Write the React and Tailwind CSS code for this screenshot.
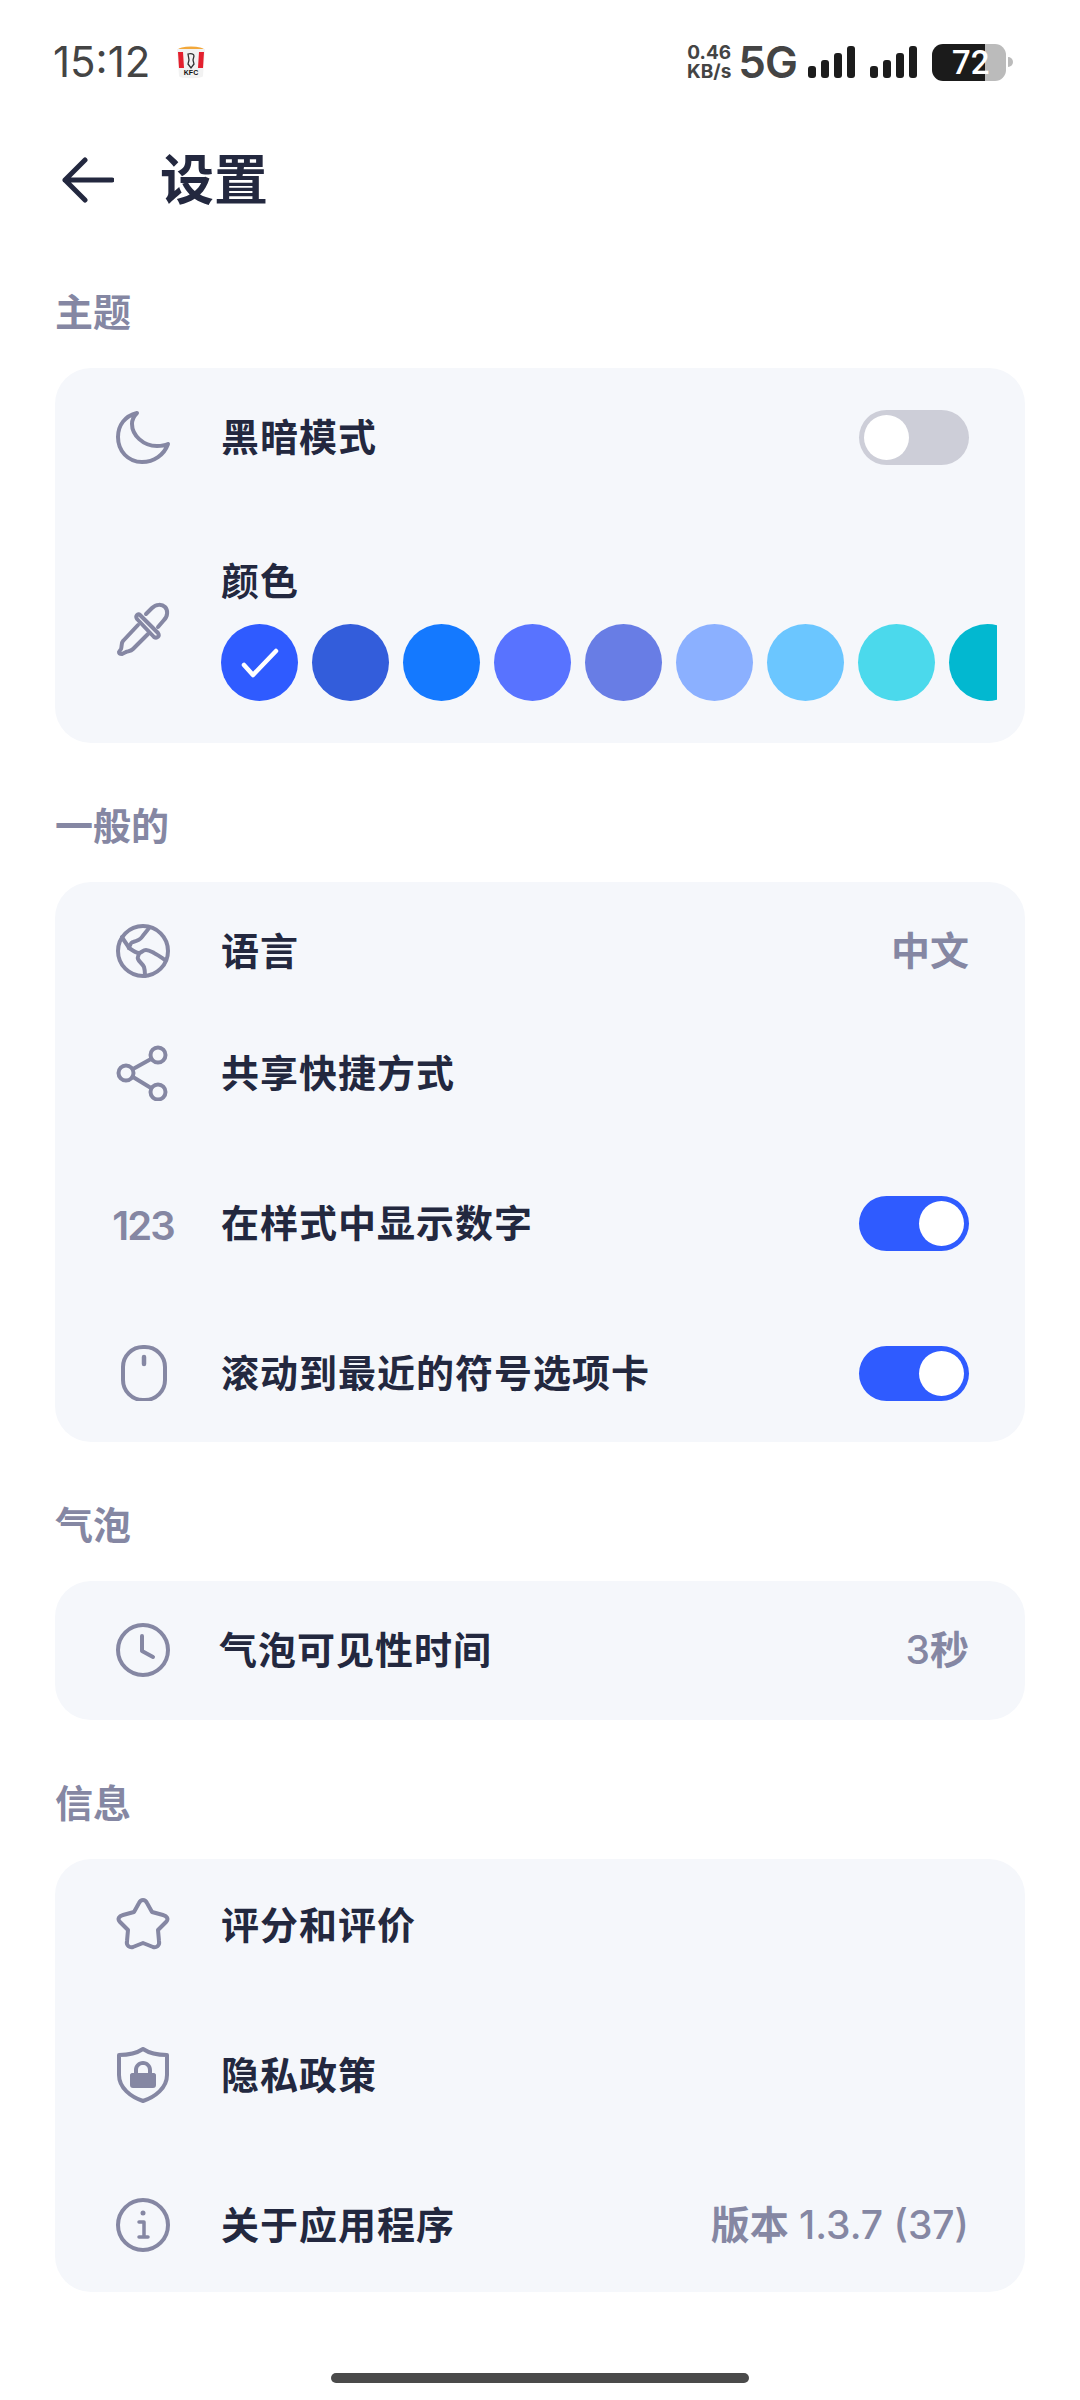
import React from 'react';

const GRAY = '#8587a3';

// Outline icons, all on a 56 unit box
const Icon = ({ children, fill = 'none' }) => (
  <svg width="56" height="56" viewBox="0 0 56 56" fill={fill} stroke={GRAY} strokeWidth="4" strokeLinecap="round" strokeLinejoin="round">
    {children}
  </svg>
);

const MoonIcon = () => (
  <Icon>
    <path d="M22 4C10 7 3 16 3 28c0 14 10 25 24 25 12 0 22-7 26-18-4 2-8 2-11 2-14 0-25-11-25-22 0-4 2-8 5-11Z" />
  </Icon>
);

const DropperIcon = () => (
  <Icon>
    <path d="M25 15c-2-2-5 1-3 4l17 18c3 2 6-1 4-4Z" />
    <path d="m31 14 6-6c4-4 10-4 13-1s3 9-1 13l-6 7" />
    <path d="M23 25 8 41c-2 2-1 6-2 8l-2 3c0 2 1 2 3 2l4-2c3-1 5-1 7-3l15-15" />
  </Icon>
);

const GlobeIcon = () => (
  <Icon>
    <circle cx="28" cy="28" r="25" />
    <path d="M7 14c2 4 5 7 7 11 1-3 2-6 4-6 4-1 7-2 9-5 2-3 5-6 7-9" />
    <path d="M14 25c3 2 7 5 10 5 2 0 4-3 7-3 3 0 6 2 8 3 4 2 8 5 11 7" />
    <path d="M24 30c0 2-2 4-1 6 1 3 5 5 6 8 1 3 1 6 1 9" />
  </Icon>
);

const ShareIcon = () => (
  <Icon>
    <circle cx="11" cy="28" r="7.5" />
    <circle cx="43" cy="10" r="7.5" />
    <circle cx="43" cy="47" r="7.5" />
    <path d="m18 24 18-10M18 32l18 11" />
  </Icon>
);

const MouseIcon = () => (
  <Icon>
    <rect x="8" y="2" width="42" height="53" rx="20" />
    <path d="M29 12v7" strokeWidth="4.5" />
  </Icon>
);

const ClockIcon = () => (
  <Icon>
    <circle cx="28" cy="28" r="25" />
    <path d="M27 14v15l11 6" />
  </Icon>
);

const StarIcon = () => (
  <Icon>
    <path d="M24 6c2-4 6-4 8 0l5 9 11 3c4 1 6 4 3 7l-8 8 1 11c1 5-3 7-6 6l-10-4-10 4c-3 1-7-1-6-6l1-11-8-8c-3-3-1-6 3-7l11-3Z" />
  </Icon>
);

const ShieldIcon = () => (
  <Icon>
    <path d="M28 2c-6 4-14 6-24 6v20c0 13 12 22 24 26 12-4 24-13 24-26V8C42 8 34 6 28 2Z" />
    <path fill={GRAY} stroke="none" d="M17 26h2v-3c0-5 4-9 9-9s9 4 9 9v3h2c1 0 2 1 2 2v10c0 2-1 3-3 3H18c-2 0-3-1-3-3V28c0-1 1-2 2-2Zm6 0h10v-3c0-3-2-5-5-5s-5 2-5 5Z" />
  </Icon>
);

const InfoIcon = () => (
  <Icon>
    <circle cx="28" cy="28" r="25" />
    <path d="M24 25h5v15M24 40h9" strokeWidth="3.5" />
    <circle cx="28" cy="16" r="2.5" fill={GRAY} stroke="none" />
  </Icon>
);

const NumbersIcon = () => (
  <span className="mt-[5px] text-[40px] leading-[56px] font-semibold tracking-[-2px] text-[#8587a3] whitespace-nowrap">123</span>
);

const Toggle = ({ on }) => (
  <div className={`w-[110px] h-[55px] rounded-full flex items-center px-[5px] ${on ? 'bg-[#2f5bff] justify-end' : 'bg-[#cdced8] justify-start'}`}>
    <div className="w-[45px] h-[45px] rounded-full bg-white" />
  </div>
);

const Row = ({ icon, label, right, className = '', labelClass = 'ml-[50px]' }) => (
  <div className={`h-[100px] flex items-center pl-[60px] pr-[56px] ${className}`}>
    <div className="w-[56px] h-[56px] flex items-center justify-center shrink-0">{icon}</div>
    <div className={`flex-1 text-[38px] font-bold tracking-[1px] text-[#23283f] whitespace-nowrap ${labelClass}`}>{label}</div>
    {right}
  </div>
);

const Value = ({ children }) => (
  <span className="text-[39px] font-medium text-[#8587a3] whitespace-nowrap">{children}</span>
);

const Section = ({ title, children, className = '' }) => (
  <section className="mb-[55px]">
    <h2 className="h-[57px] leading-[57px] text-[38px] font-bold text-[#8587a3]">{title}</h2>
    <div className={`mt-[27px] rounded-[36px] bg-[#f5f7fb] ${className}`}>{children}</div>
  </section>
);

const swatches = ['#2f5bff', '#335ddb', '#1479ff', '#5873ff', '#687de5', '#8bb0ff', '#6bc6ff', '#4bd9ec', '#02b8d0'];

const SignalBars = () => (
  <div className="flex items-end gap-[5px] h-[32px]">
    <div className="w-[8px] h-[12px] rounded-[3px] bg-[#1c1c1c]" />
    <div className="w-[8px] h-[18px] rounded-[3px] bg-[#1c1c1c]" />
    <div className="w-[8px] h-[25px] rounded-[3px] bg-[#1c1c1c]" />
    <div className="w-[8px] h-[32px] rounded-[3px] bg-[#1c1c1c]" />
  </div>
);

const KfcBucket = () => (
  <svg width="28" height="33" viewBox="0 0 28 33">
    <ellipse cx="14" cy="3.5" rx="13" ry="3" fill="#f2a83b" />
    <path d="M0 3h28l-2 27c0 3-24 3-24 0Z" fill="#f2f2f2" />
    <path d="M1 6h5l1 16H2ZM27 6h-5l-1 16h5Z" fill="#e3202e" />
    <path d="M11 8c3-1 6 0 6 2l-1 4 1 4-3 4-3-4 1-4Z" fill="none" stroke="#333" strokeWidth="1.3" />
    <text x="14" y="29" textAnchor="middle" fontSize="7" fontWeight="700" fontFamily="Liberation Sans, sans-serif" fill="#111">KFC</text>
  </svg>
);

const StatusBar = () => (
  <div className="h-[124px] flex items-center justify-between pl-[53px] pr-[67px] text-[#444]">
    <div className="flex items-center gap-[27px]">
      <span className="text-[42px] leading-none font-normal">15:12</span>
      <KfcBucket />
    </div>
    <div className="flex items-center">
      <div className="flex flex-col items-center text-[19px] leading-[19px] font-bold">
        <span>0.46</span>
        <span>KB/s</span>
      </div>
      <span className="ml-[7px] text-[44px] leading-none font-semibold tracking-[-1px]">5G</span>
      <div className="ml-[11px]"><SignalBars /></div>
      <div className="ml-[15px]"><SignalBars /></div>
      <div className="ml-[15px] w-[74px] h-[37px] flex relative">
        <div className="w-[53px] bg-[#1b1b1b] rounded-l-[11px]" />
        <div className="w-[21px] bg-[#bbbbbb] rounded-r-[11px]" />
        <span className="absolute left-[20px] top-0 text-[33px] leading-[37px] font-medium text-white font-['Roboto',sans-serif]">72</span>
      </div>
      <div className="ml-[2px] w-[5px] h-[10px] rounded-r-full bg-[#bbbbbb]" />
    </div>
  </div>
);

export default function App() {
  return (
    <div className="w-[1080px] h-[2400px] bg-white flex flex-col font-['Inter','Noto_Sans_CJK_SC',sans-serif]">
      <StatusBar />

      {/* Header */}
      <div className="h-[112px] mb-[48px] flex items-center pl-[62px]">
        <svg width="52" height="46" viewBox="0 0 52 46" fill="none" stroke="#23283f" strokeWidth="5" strokeLinecap="round" strokeLinejoin="round">
          <path d="M50 23H3M23 3 3 23l20 20" />
        </svg>
        <h1 className="ml-[46px] text-[54px] font-bold text-[#23283f]">设置</h1>
      </div>

      <div className="px-[55px] flex-1">
        <Section title="主题" className="pt-[19px] pb-[42px]">
          <Row icon={<MoonIcon />} label="黑暗模式" right={<Toggle />} />
          <div className="mt-[68px] flex items-center pl-[60px]">
            <div className="w-[56px] h-[56px] shrink-0"><DropperIcon /></div>
            <div className="ml-[50px] w-[776px] overflow-hidden">
              <div className="h-[53px] leading-[53px] text-[38px] font-bold tracking-[1px] text-[#23283f]">颜色</div>
              <div className="mt-[16px] flex gap-[14px]">
                {swatches.map((c, i) => (
                  <div key={c} className="w-[77px] h-[77px] rounded-full shrink-0 flex items-center justify-center" style={{ backgroundColor: c }}>
                    {i === 0 && (
                      <svg width="38" height="30" viewBox="0 0 38 30" fill="none" stroke="#fff" strokeWidth="4.5" strokeLinecap="round" strokeLinejoin="round">
                        <path d="M3 17l9 10L35 3" />
                      </svg>
                    )}
                  </div>
                ))}
              </div>
            </div>
          </div>
        </Section>

        <Section title="一般的" className="pt-[19px] pb-[19px]">
          <Row icon={<GlobeIcon />} label="语言" right={<Value><span className="font-bold">中文</span></Value>} />
          <Row icon={<ShareIcon />} label="共享快捷方式" className="mt-[22px]" />
          <Row icon={<NumbersIcon />} label="在样式中显示数字" right={<Toggle on />} className="mt-[50px]" />
          <Row icon={<MouseIcon />} label="滚动到最近的符号选项卡" right={<Toggle on />} className="mt-[50px]" />
        </Section>

        <Section title="气泡" className="pt-[19px] pb-[20px]">
          <Row icon={<ClockIcon />} label="气泡可见性时间" labelClass="ml-[48px]" right={<Value>3<span className="font-bold">秒</span></Value>} />
        </Section>

        <Section title="信息" className="pt-[16px] pb-[17px]">
          <Row icon={<StarIcon />} label="评分和评价" />
          <Row icon={<ShieldIcon />} label="隐私政策" className="mt-[50px]" />
          <Row icon={<InfoIcon />} label="关于应用程序" right={<Value><span className="font-bold">版本</span> 1.3.7 (37)</Value>} className="mt-[50px]" />
        </Section>
      </div>

      {/* Home indicator */}
      <div className="h-[27px] flex justify-center">
        <div className="w-[418px] h-[10px] rounded-full bg-[#4a4a4a]" />
      </div>
    </div>
  );
}
